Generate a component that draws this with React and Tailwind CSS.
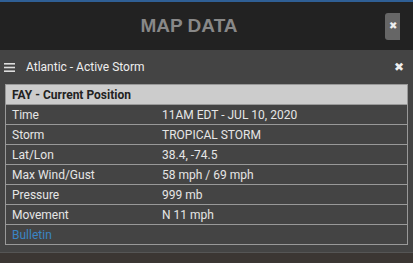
import React from 'react';

export default function App() {
  const rows = [
    ['Time', '11AM EDT - JUL 10, 2020'],
    ['Storm', 'TROPICAL STORM'],
    ['Lat/Lon', '38.4, -74.5'],
    ['Max Wind/Gust', '58 mph / 69 mph'],
    ['Pressure', '999 mb'],
    ['Movement', 'N 11 mph'],
  ];

  return (
    <div className="w-[413px] h-[263px] bg-[#3b3633] overflow-hidden flex flex-col" style={{ fontFamily: 'Roboto, "Liberation Sans", sans-serif' }}>
      <div className="h-[2px] bg-[#2f5f95]"></div>

      {/* Header */}
      <div className="h-[48px] bg-[#222222] flex items-center">
        <span className="flex-1 text-center pr-[7px] text-[19px] font-bold text-[#888888]" style={{ fontFamily: '"Liberation Sans", Arial, sans-serif' }}>
          MAP DATA
        </span>
        <button className="w-[15px] h-[27px] mr-[13px] bg-[#666666] rounded-l-[3px] flex items-center justify-center text-[#eeeeee] text-[10px] leading-none">
          ✖
        </button>
      </div>

      {/* Panel */}
      <div className="h-[203px] bg-[#444444] border-b border-[#555555] px-[5px]">
        <div className="h-[34px] flex items-center text-[#eeeeee] text-[12px]">
          <svg width="11" height="9" viewBox="0 0 11 9" className="ml-[-1px] mr-[11px]">
            <rect x="0" y="0" width="11" height="1.6" fill="#dddddd" />
            <rect x="0" y="3.7" width="11" height="1.6" fill="#dddddd" />
            <rect x="0" y="7.4" width="11" height="1.6" fill="#dddddd" />
          </svg>
          <span className="flex-1">Atlantic - Active Storm</span>
          <span className="mr-[4px] text-[12px] text-[#eeeeee] leading-none">✖</span>
        </div>

        <div className="border border-[#999999] text-[12px]">
          <div className="h-[20px] bg-[#cccccc] flex items-center px-[6px] font-bold text-[#222222] border-b border-[#999999]">
            FAY - Current Position
          </div>
          {rows.map(([label, value]) => (
            <div key={label} className="h-[20px] flex items-center px-[6px] text-[#e6e6e6] border-b border-[#999999]">
              <span className="w-[150px]">{label}</span>
              <span>{value}</span>
            </div>
          ))}
          <div className="h-[19px] flex items-center px-[6px] text-[#3a84c4]">Bulletin</div>
        </div>
      </div>
    </div>
  );
}
